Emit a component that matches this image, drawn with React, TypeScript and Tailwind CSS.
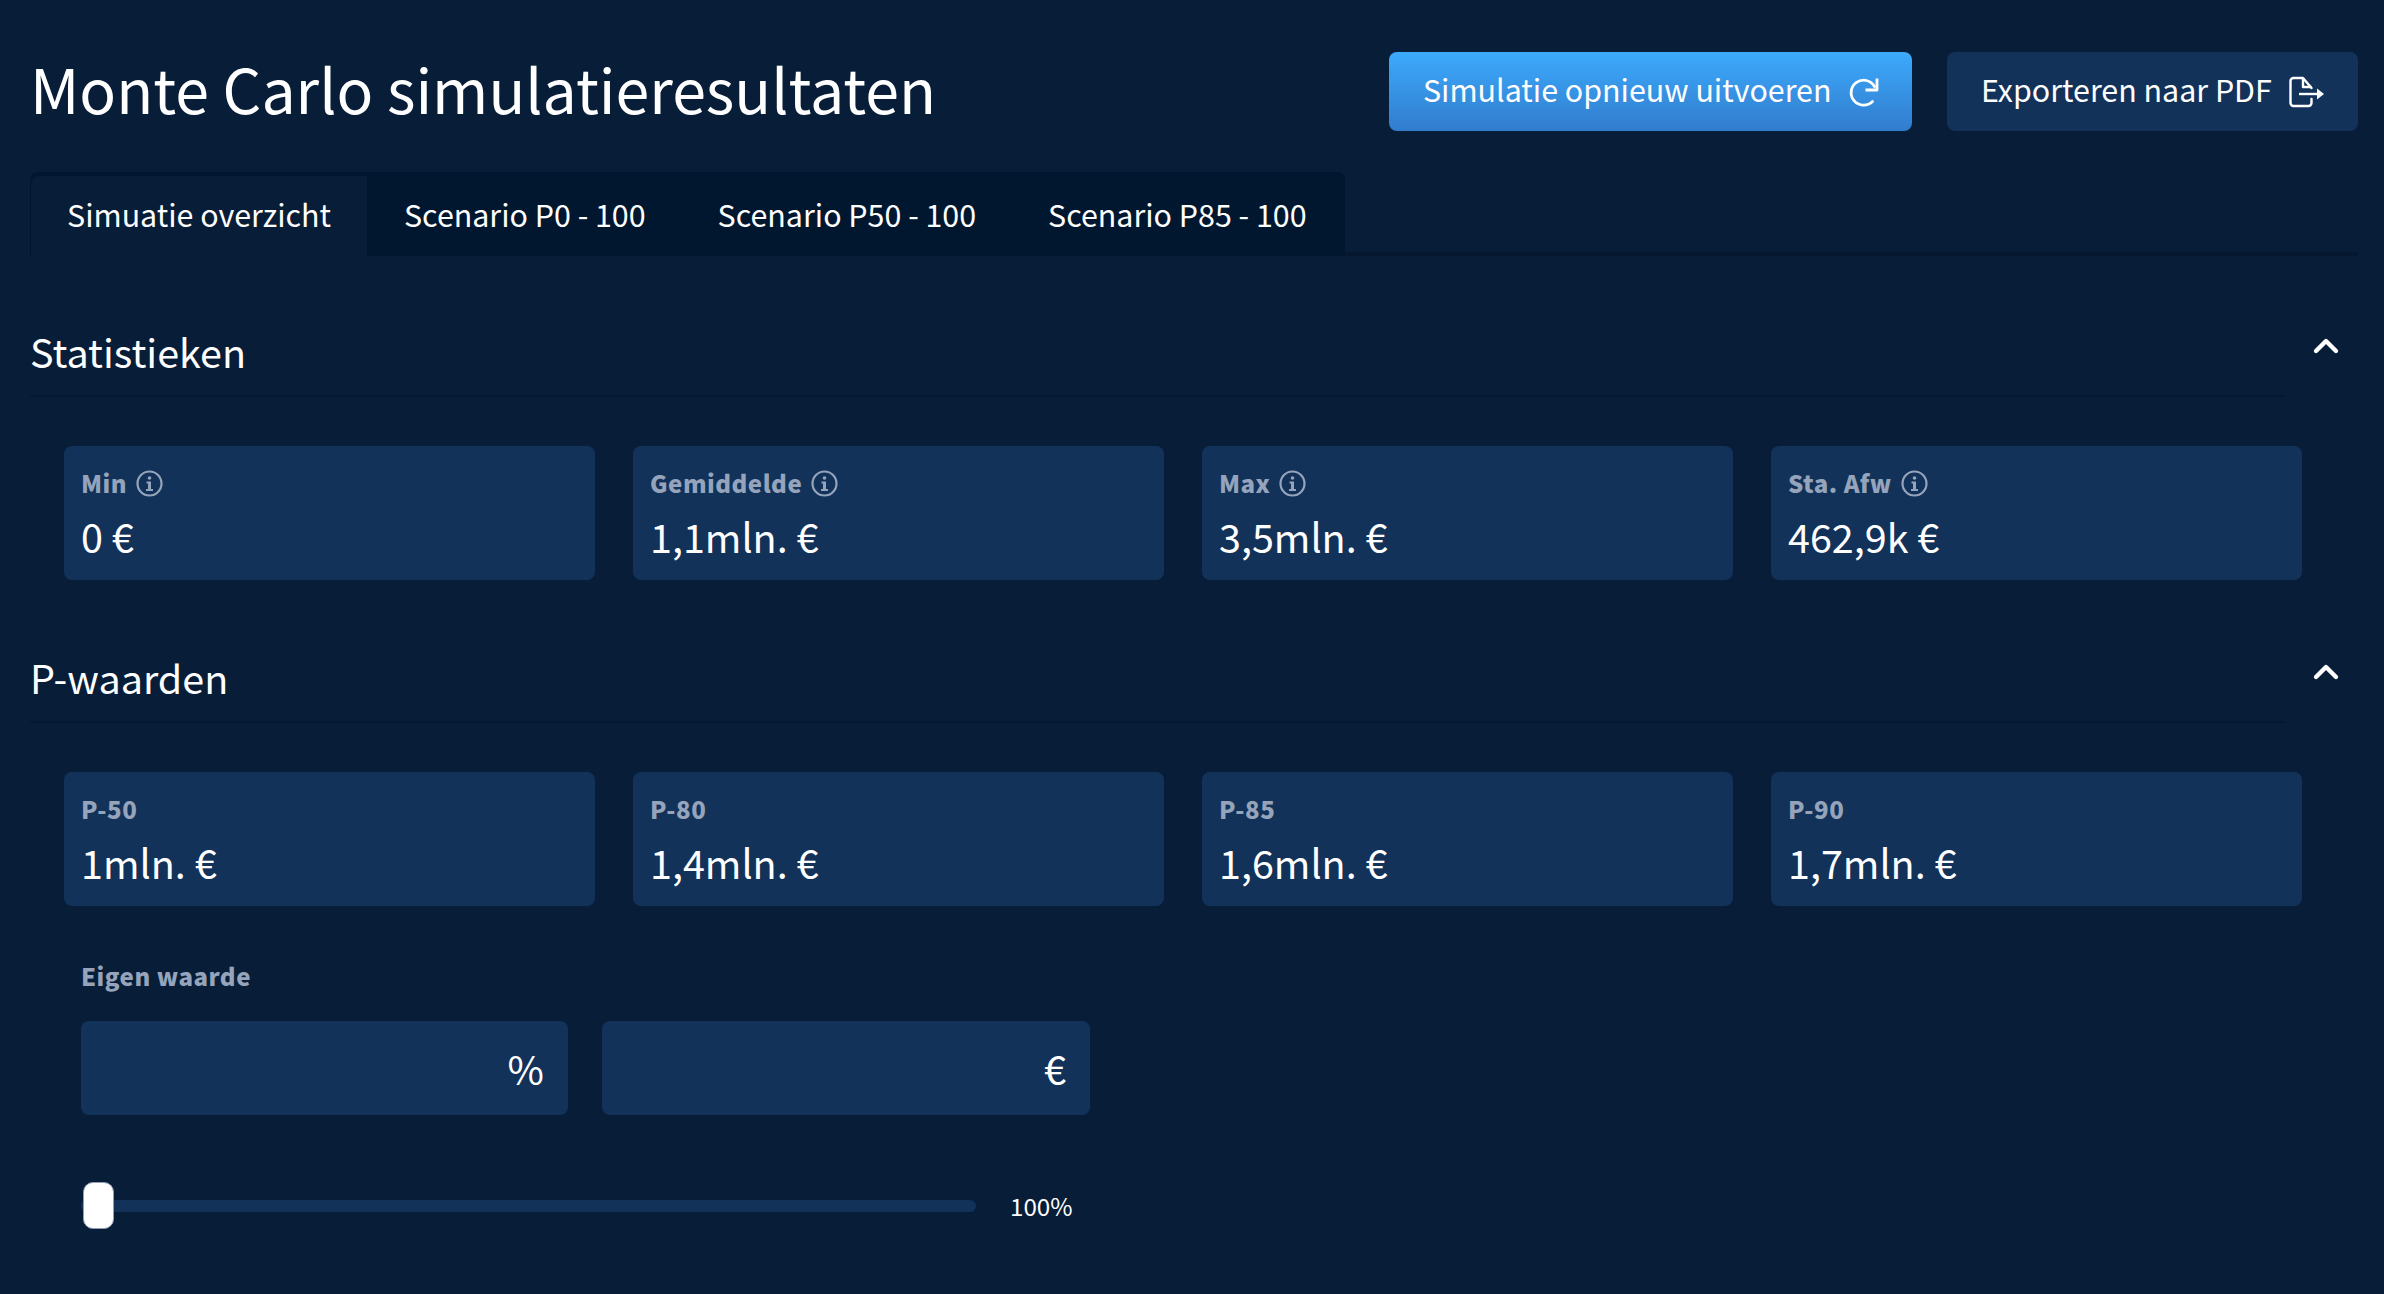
import { ChevronUp } from 'lucide-react';

const stats = [
  { label: 'Min', value: '0 €' },
  { label: 'Gemiddelde', value: '1,1mln. €' },
  { label: 'Max', value: '3,5mln. €' },
  { label: 'Sta. Afw', value: '462,9k €' },
];

const pValues = [
  { label: 'P-50', value: '1mln. €' },
  { label: 'P-80', value: '1,4mln. €' },
  { label: 'P-85', value: '1,6mln. €' },
  { label: 'P-90', value: '1,7mln. €' },
];

const tabs = ['Scenario P0 - 100', 'Scenario P50 - 100', 'Scenario P85 - 100'];

function RerunIcon() {
  return (
    <svg width="30" height="30" viewBox="0 0 30 30" fill="none" stroke="currentColor" strokeWidth="2.8" strokeLinejoin="round">
      <path d="M23.5 24.5A12.5 12.5 0 1 1 25.5 9.5" strokeLinecap="round" />
      <path d="M28 1.5V13H16.5" />
    </svg>
  );
}

function ExportIcon() {
  return (
    <svg width="36" height="32" viewBox="0 0 36 32" fill="none" stroke="currentColor" strokeWidth="2.4" strokeLinejoin="round">
      <path d="M22.5 12 14 2H4.5A3 3 0 0 0 1.5 5V27A3 3 0 0 0 4.5 30H19.5A3 3 0 0 0 22.5 27V23" strokeLinecap="round" />
      <path d="M14 2V11H22.5" />
      <path d="M10 18H29" />
      <path d="M28 12.5 35 18 28 23.5Z" fill="currentColor" stroke="none" />
    </svg>
  );
}

function InfoIcon() {
  return (
    <svg width="27" height="27" viewBox="0 0 27 27" fill="none" stroke="currentColor" strokeWidth="2.2">
      <circle cx="13.5" cy="13.5" r="12" />
      <circle cx="13.5" cy="8" r="1.8" fill="currentColor" stroke="none" />
      <path d="M10.5 11.5H15V19H17V21H10V19H12V13.5H10.5Z" fill="currentColor" stroke="none" />
    </svg>
  );
}

function StatCard({ label, value, info }: { label: string; value: string; info?: boolean }) {
  return (
    <div className="h-[134px] rounded-lg bg-[#12325a] px-[17px] pt-[20px]">
      <div className="flex h-[34px] items-center gap-[9px] text-[24px] leading-[34px] font-black tracking-[0.5px] text-[#95a4bb]">
        <span>{label}</span>
        {info && <InfoIcon />}
      </div>
      <div className="mt-[10px] text-[39.5px] leading-[52px] text-white">{value}</div>
    </div>
  );
}

function SectionHeader({ title }: { title: string }) {
  return (
    <div className="flex items-start justify-between pr-[12px]">
      <h2 className="h-[77px] flex-1 border-b-2 border-[#05182f] text-[39.5px] leading-[62px] text-white">{title}</h2>
      <ChevronUp className="mt-[6px] ml-[20px] size-[40px] text-white" strokeWidth={2.6} />
    </div>
  );
}

export default function App() {
  return (
    <div
      className="h-[1294px] w-full overflow-hidden bg-[#071d38] pt-[52px] pr-[26px] pl-[30px] text-white"
      style={{ fontFamily: '"Noto Sans CJK SC", "Noto Sans", sans-serif' }}
    >
      <header className="flex h-[79px] items-center justify-between">
        <h1 className="mb-[7px] text-[60.8px] leading-[80px] font-normal">Monte Carlo simulatieresultaten</h1>
        <div className="flex gap-[35px]">
          <button className="flex h-[79px] w-[523px] items-center gap-[18px] rounded-lg bg-gradient-to-b from-[#3caafc] to-[#327ccd] pl-[34px] text-[30.4px]">
            <span className="pb-[3px]">Simulatie opnieuw uitvoeren</span>
            <RerunIcon />
          </button>
          <button className="flex h-[79px] w-[411px] items-center gap-[17px] rounded-lg bg-[#12325a] pl-[34px] text-[30.4px]">
            <span className="pb-[3px]">Exporteren naar PDF</span>
            <ExportIcon />
          </button>
        </div>
      </header>

      <nav className="mt-[41px] flex h-[84px] items-end border-b-4 border-[#05182f]">
        <div className="-mb-[4px] flex h-[84px] items-stretch rounded-t-lg bg-[#011730] pt-[4px] pl-[1px] text-[30.4px]">
          <div className="flex w-[336px] items-center justify-center rounded-tl-lg bg-[#071d38] pb-[2px]">Simuatie overzicht</div>
          <div className="flex pr-[2px] pl-[1px]">
            {tabs.map((tab) => (
              <div key={tab} className="flex items-center px-[36px] pb-[2px]">{tab}</div>
            ))}
          </div>
        </div>
      </nav>

      <section className="mt-[64px]">
        <SectionHeader title="Statistieken" />
        <div className="mt-[49px] grid grid-cols-4 gap-[38px] pr-[56px] pl-[34px]">
          {stats.map((s) => (
            <StatCard key={s.label} label={s.label} value={s.value} info />
          ))}
        </div>
      </section>

      <section className="mt-[66px]">
        <SectionHeader title="P-waarden" />
        <div className="mt-[49px] grid grid-cols-4 gap-[38px] pr-[56px] pl-[34px]">
          {pValues.map((s) => (
            <StatCard key={s.label} label={s.label} value={s.value} />
          ))}
        </div>
      </section>

      <section className="mt-[53px] pl-[51px]">
        <div className="text-[24px] leading-[34px] font-black tracking-[0.5px] text-[#95a4bb]">Eigen waarde</div>
        <div className="mt-[28px] flex gap-[34px]">
          <div className="flex h-[94px] w-[487px] items-center justify-end rounded-lg bg-[#12325a] pr-[24px] text-[39.5px]">%</div>
          <div className="flex h-[94px] w-[488px] items-center justify-end rounded-lg bg-[#12325a] pr-[24px] text-[39.5px]">€</div>
        </div>
        <div className="mt-[74px] flex items-center">
          <div className="relative h-[12px] w-[895px] rounded-md bg-[#12325a]">
            <div className="absolute -top-[18px] left-[2px] h-[47px] w-[31px] rounded-[10px] border-[1.5px] border-[#8f9fb8] bg-white" />
          </div>
          <span className="ml-[34px] text-[24.2px] leading-[34px]">100%</span>
        </div>
      </section>
    </div>
  );
}
